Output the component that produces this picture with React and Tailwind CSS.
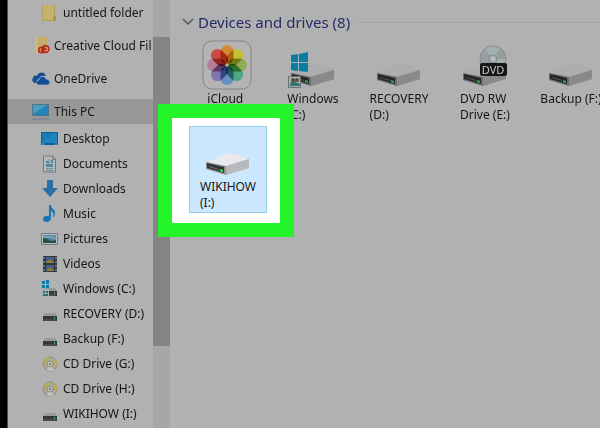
import { useState } from 'react';

const folders = [
  { name: 'untitled folder', icon: 'folder', pad: 'pl-[33px]' },
  { name: 'Creative Cloud Fil', icon: 'creative', pad: 'pl-6 mt-2' },
  { name: 'OneDrive', icon: 'onedrive', pad: 'pl-6 mt-2' },
  { name: 'This PC', icon: 'pc', pad: 'pl-6 mt-2' },
];

const places = [
  { name: 'Desktop', icon: 'desktop' },
  { name: 'Documents', icon: 'documents' },
  { name: 'Downloads', icon: 'downloads' },
  { name: 'Music', icon: 'music' },
  { name: 'Pictures', icon: 'pictures' },
  { name: 'Videos', icon: 'videos' },
  { name: 'Windows (C:)', icon: 'windows' },
  { name: 'RECOVERY (D:)', icon: 'drive' },
  { name: 'Backup (F:)', icon: 'drive' },
  { name: 'CD Drive (G:)', icon: 'disc' },
  { name: 'CD Drive (H:)', icon: 'disc' },
  { name: 'WIKIHOW (I:)', icon: 'drive' },
];

const SmallIcon = ({ type }) => (
  <svg viewBox="0 0 18 18" className="size-[18px] shrink-0" aria-hidden="true">
    {type === 'folder' && (
      <>
        <path d="M1 1h13v12h1v4H1z" fill="#b5a05a" />
        <path d="M2 1h11v15H2z" fill="#c5b36d" />
        <path d="M12 12h3v5h-3z" fill="#ab964b" />
      </>
    )}
    {type === 'creative' && (
      <>
        <path d="M3 0h12v16H3z" fill="#c2ad69" />
        <path d="M3 0h3v16H3z" fill="#cbb97c" />
        <g fill="none" stroke="#b6281d" strokeWidth="1.6">
          <circle cx="9.5" cy="13" r="2.8" />
          <circle cx="13.5" cy="12" r="3.4" />
          <path d="m9 14 4-3 2 2" />
        </g>
      </>
    )}
    {type === 'onedrive' && (
      <>
        <path d="M3 13a3 3 0 0 1-2-5c0-2 2-3 4-2 2-5 8-4 9 0-4-1-6 1-6 3-3 0-4 2-3 4z" fill="#104f99" />
        <path d="M7 15c-4 0-3-5 0-5 0-4 6-5 7-1 4 0 5 5 2 6z" fill="#104f99" stroke="#b1b1b1" strokeWidth=".7" />
      </>
    )}
    {type === 'pc' && (
      <>
        <path d="M0 1h17v12H0z" fill="#4c7488" />
        <path d="M1 2h15v10H1z" fill="#2584b7" />
        <path d="M1 2h14L1 11z" fill="#4b9cc2" />
        <path d="M6 13h5v1H6z" fill="#849097" />
        <path d="M0 16h17" stroke="#6d7f8a" />
      </>
    )}
    {type === 'desktop' && (
      <>
        <path d="M0 2h17v13H0z" fill="#105d98" />
        <path d="M1 3h15v10H1z" fill="#177bb7" />
        <path d="m1 13 13-10h2v10z" fill="#1e85bd" />
        <path d="M1 14h2m11 0h2" stroke="#a6b8be" />
      </>
    )}
    {type === 'documents' && (
      <>
        <path d="M2.5 1h9l3 3v13h-12z" fill="#b4babc" stroke="#747b7e" />
        <path d="M11.500 1v3.500h3" fill="none" stroke="#747b7e" />
        <path d="M5 6h3v2H5zm5-1h2v3h-2zM5 9h7v3H5z" fill="#438ba6" />
        <path d="M5 13.500h7m-7 2h7M8 4v8" stroke="#708e99" />
      </>
    )}
    {type === 'downloads' && <path d="M6 0h6v8h5l-8 9-8-9h5z" fill="#286fa8" />}
    {type === 'music' && (
      <path d="M8 0h2c0 4 4 4 4 8 0 2-1 4-2 5 1-4 0-6-2-7v7c0 5-8 5-8 1 0-3 4-4 6-3z" fill="#1975b3" />
    )}
    {type === 'pictures' && (
      <>
        <path d="M.5 3.500h16v11H.5z" fill="#b3bdc1" stroke="#747b7e" />
        <path d="M2 5h13v8H2z" fill="#568ca7" />
        <path d="m2 8 5 1 3 2 5-1v3H2z" fill="#284f48" />
        <path d="M2 7h9l4 2" fill="none" stroke="#9bb2ba" />
      </>
    )}
    {type === 'videos' && (
      <>
        <path d="M2 1h14v16H2z" fill="#34383b" />
        <path d="M5 2h8v6H5z" fill="#3d5f92" />
        <path d="M5 10h8v6H5z" fill="#3d5f92" />
        <path d="m5 7 4-3 4 4H5zm0 9 4-4 4 4z" fill="#9d7d31" />
        <path d="M3 2v14M15 2v14" stroke="#90999d" strokeDasharray="2 2" />
      </>
    )}
    {(type === 'drive' || type === 'windows') && (
      <>
        <path d="M4 8h10l2 3H2z" fill="#98999a" />
        <path d="M2 11h14v5H2z" fill="#343839" />
        <path d="M3 15h12" stroke="#5b5f60" />
        <path d="M13 12h1v2h-1z" fill="#45c35c" />
      </>
    )}
    {type === 'windows' && (
      <>
        <path d="M1 1h3v3H1zm4-1h3v4H5zM1 5h3v3H1zm4 0h3v3H5z" fill="#077eaa" />
        <path d="M1 9h7v7H1z" fill="#a3b0b1" />
        <path d="M2 11h2v2H2zm3 0h2v2H5zm-3 3h5v2H2z" fill="#356b73" />
      </>
    )}
    {type === 'disc' && (
      <>
        <circle cx="9" cy="9" r="7" fill="#aaa894" stroke="#8e8e78" />
        <path d="M9 9 2 7a8 8 0 0 1 6-5zm0 0 7 2a8 8 0 0 0-1-7z" fill="#b4ac5a" />
        <path d="m9 9 4 6a8 8 0 0 1-7 0z" fill="#c3c3bd" />
        <circle cx="9" cy="9" r="3" fill="#bdbdb5" stroke="#8d9085" />
        <circle cx="9" cy="9" r="1" fill="#70756f" />
      </>
    )}
  </svg>
);

const DriveShape = () => (
  <>
    <path d="m2 13 23-9q1-1 3 0l17 6v9L22 26 2 20z" fill="#98989a" />
    <path d="m2 13 23-9q1-1 3 0l17 6-23 7z" fill="#adadaf" />
    <path d="m22 17 23-7v9l-23 7z" fill="#88898b" />
    <path d="m2 13 20 4v9L2 20z" fill="#6c6d6e" />
    <path d="m3 14 17 4v6L3 19z" fill="#232727" />
    <path d="m5 17 10 3v1L5 18z" fill="#505554" />
    <path d="m16 20 3 1v2l-3-1z" fill="#2cba42" />
  </>
);

const DriveIcon = ({ type, selected }) => (
  <svg
    viewBox="0 0 50 48"
    className={selected ? 'h-12 w-[50px] brightness-135' : 'h-12 w-[50px] overflow-visible'}
    aria-hidden="true"
  >
    <g transform="translate(1 20)">
      <DriveShape />
    </g>
    {type === 'windows' && (
      <>
        <path d="m3 15 7-1v8H3zm8-1 9-2v10h-9zM3 23h7v8l-7-1zm8 0h9v9l-9-1z" fill="#087da4" />
        <path d="M.5 36.500h12v11H.5z" fill="#a8b1b0" stroke="#666d6e" />
        <path d="M2 46c0-4 2-5 4-5s3 2 3 5zm6 0v-3c3-1 4 1 4 3z" fill="#337378" />
        <circle cx="5" cy="40" r="2" fill="#604b39" />
        <circle cx="9" cy="40" r="2" fill="#604b39" />
      </>
    )}
    {type === 'dvd' && (
      <>
        <circle cx="33" cy="19" r="13" fill="#969e9f" stroke="#848a8c" />
        <path d="m33 19-8-10q8-5 15 0zm0 0 9 9 4-9z" fill="#a4b0b0" />
        <circle cx="33" cy="19" r="4" fill="#a8adad" stroke="#818787" />
        <circle cx="33" cy="19" r="2" fill="#bbb" />
        <rect x="20" y="23" width="27" height="13" rx="2" fill="#151617" />
        <text x="33" y="34" textAnchor="middle" fontSize="11" fill="#c5c5c5">DVD</text>
      </>
    )}
  </svg>
);

const petals = [
  { angle: 0, color: '#d78a36' },
  { angle: 45, color: '#c3be32' },
  { angle: 90, color: '#8fab55' },
  { angle: 135, color: '#4fa583' },
  { angle: 180, color: '#6791c0' },
  { angle: 225, color: '#8077b0' },
  { angle: 270, color: '#b57f9c' },
  { angle: 315, color: '#cb4c40' },
];

const PhotosIcon = () => (
  <svg viewBox="0 0 50 50" className="size-[50px]" aria-hidden="true">
    <rect x="1" y="1" width="48" height="48" rx="9" fill="#b4b4b4" stroke="#868686" />
    <g className="isolate">
      {petals.map(({ angle, color }) => (
        <rect
          key={angle}
          x="18.500"
          y="5"
          width="13"
          height="19"
          rx="6.500"
          fill={color}
          transform={`rotate(${angle} 25 25)`}
          className="mix-blend-multiply"
        />
      ))}
    </g>
    <circle cx="25" cy="25" r="1.500" fill="#b4b4b4" />
  </svg>
);

const devices = [
  { name: ['iCloud', 'Photos'], icon: 'photos' },
  { name: ['Windows', '(C:)'], icon: 'windows' },
  { name: ['RECOVERY', '(D:)'], icon: 'drive' },
  { name: ['DVD RW', 'Drive (E:)'], icon: 'dvd' },
  { name: ['Backup (F:)'], icon: 'drive' },
];

const Sidebar = () => {
  const [current, setCurrent] = useState('This PC');

  return (
    <nav aria-label="Folders" className="w-[145px] shrink-0">
      {folders.map(({ name, icon, pad }) => (
        <button
          key={name}
          onClick={() => setCurrent(name)}
          className={`flex h-[25px] w-full items-center gap-1 text-left whitespace-nowrap ${pad} ${current === name ? 'bg-[#989898]' : ''}`}
        >
          <SmallIcon type={icon} />
          {name}
        </button>
      ))}
      <div className="pt-0.5">
        {places.map(({ name, icon }) => (
          <button
            key={name}
            onClick={() => setCurrent(name)}
            className={`flex h-[25px] w-full items-center gap-1 pl-[33px] text-left whitespace-nowrap ${current === name ? 'bg-[#989898]' : ''}`}
          >
            <SmallIcon type={icon} />
            {name}
          </button>
        ))}
      </div>
    </nav>
  );
};

export default function App() {
  const [open, setOpen] = useState(true);

  return (
    <div className="flex min-h-screen overflow-hidden bg-[#b1b1b1] font-['Noto_Sans',sans-serif] text-[12px] leading-4 text-[#151515]">
      <div className="w-2 shrink-0 border-r border-[#793365] bg-black" />
      <Sidebar />
      <div className="w-[17px] shrink-0 bg-[#a7a7a7] pt-[37px]">
        <div className="h-[309px] bg-[#858585]" />
      </div>

      <main className="relative min-w-0 flex-1 pt-3 pl-3">
        <button
          aria-expanded={open}
          onClick={() => setOpen(!open)}
          className="flex w-full items-center gap-1 text-[15px] leading-5 whitespace-nowrap text-[#252b68]"
        >
          <svg viewBox="0 0 12 12" className="size-3" aria-hidden="true">
            <path d="m1 3 5 5 5-5" fill="none" stroke="#555" strokeWidth="1.500" />
          </svg>
          Devices and drives (8)
          <span className="ml-1 h-px flex-1 bg-[#a2a2a2]" />
        </button>

        {open && (
          <div className="mt-2 ml-0.5 grid grid-cols-[repeat(5,86px)]">
            {devices.map(({ name, icon }) => (
              <button key={name[0]} className="flex w-[86px] flex-col items-center">
                <span className="flex h-[51px] items-start">
                  {icon === 'photos' ? <PhotosIcon /> : <DriveIcon type={icon} />}
                </span>
                <span className="text-left whitespace-nowrap">
                  {name.map((line) => <span key={line} className="block">{line}</span>)}
                </span>
              </button>
            ))}
          </div>
        )}

        <div className="absolute top-[104px] -left-3 border-[14px] border-[#24f52b] bg-white pt-2 pr-[13px] pb-[10px] pl-[17px]">
          <button className="flex h-[87px] w-[78px] flex-col items-center gap-0.5 border border-[#99cce9] bg-[#cce8ff] pt-0.5">
            <DriveIcon type="drive" selected />
            <span className="text-left">
              <span className="block">WIKIHOW</span>
              <span className="block">(I:)</span>
            </span>
          </button>
        </div>
      </main>
    </div>
  );
}
